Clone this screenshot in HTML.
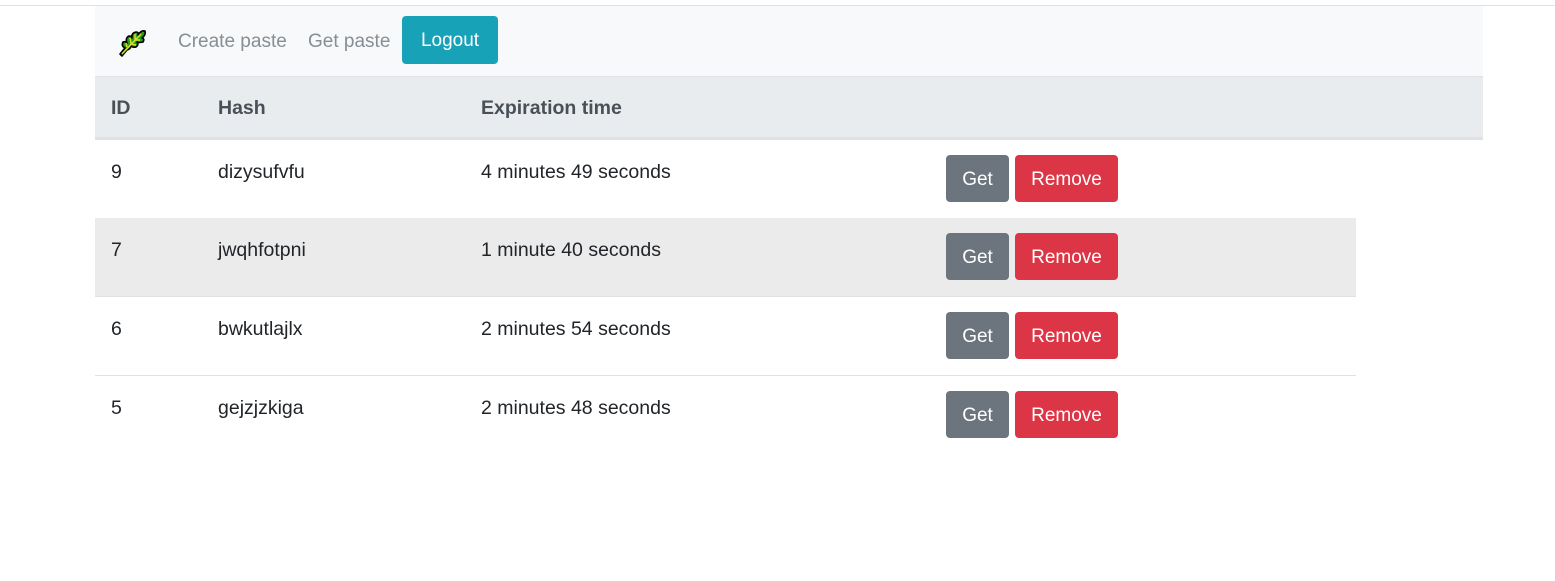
<!DOCTYPE html>
<html><head><style>
body{margin:0;background:#fff;font-family:"Liberation Sans",sans-serif;color:#212529;width:1555px;height:581px;position:relative;overflow:hidden}
.top{position:absolute;left:0;top:5px;width:1555px;height:1px;background:#dee2e6}
.nav{position:absolute;left:95px;top:6px;width:1388px;height:70px;background:#f8f9fa;border-bottom:1px solid #dee2e6}
.nav a{position:absolute;top:25px;font-size:19px;color:#868e96;text-decoration:none}
.logout{position:absolute;left:307px;top:10px;width:96px;height:48px;background:#17a2b8;border-radius:4px;color:#fff;font-size:19px;line-height:50px;text-align:center}
.thead{position:absolute;left:95px;top:77px;width:1388px;height:60px;background:#e9ecef;border-bottom:3px solid #dee2e6}
.th{position:absolute;top:20px;font-weight:bold;font-size:19.5px;color:#495057}
.row{position:absolute;left:95px;width:1261px;height:78px;border-bottom:1px solid #dee2e6}
.row span{position:absolute;top:21px;font-size:19.5px}
.b{position:absolute;top:15px;height:47px;line-height:50px;border-radius:4px;color:#fff;font-size:19px;text-align:center}
.g{left:851px;width:63px;background:#6c757d}
.r{left:920px;width:103px;background:#dc3545}
</style></head><body>
<div class="top"></div>
<div class="nav">
<svg style="position:absolute;left:22px;top:20px" width="30" height="32" viewBox="0 0 30 32">
<path d="M3 28 L8 22 Q4 20 6 16 Q9 15 10 17 Q8 12 12 10 Q15 10 15 12 Q14 7 19 6 Q22 6 21 9 Q24 4 28 5 Q29 9 25 12 Q28 13 26 16 Q22 17 20 16 Q22 19 19 21 Q15 22 14 19 Q14 23 10 24 L5 30 Z" fill="#2a9d1a" stroke="#000" stroke-width="1.6" stroke-linejoin="round"/>
<path d="M5 28 L24 8 M10 21 L9 17 M14 17 L13 12 M18 13 L18 8 M13 18 L19 19 M17 14 L23 14" stroke="#d6e12a" stroke-width="1.5" fill="none"/>
</svg>
<a style="left:83px">Create paste</a>
<a style="left:213px">Get paste</a>
<div class="logout">Logout</div>
</div>
<div class="thead">
<div class="th" style="left:16px">ID</div>
<div class="th" style="left:123px">Hash</div>
<div class="th" style="left:386px">Expiration time</div>
</div>
<div class="row" style="top:140px"><span style="left:16px">9</span><span style="left:123px">dizysufvfu</span><span style="left:386px">4 minutes 49 seconds</span><div class="b g">Get</div><div class="b r">Remove</div></div>
<div class="row" style="top:218px;background:#ebebeb"><span style="left:16px">7</span><span style="left:123px">jwqhfotpni</span><span style="left:386px">1 minute 40 seconds</span><div class="b g">Get</div><div class="b r">Remove</div></div>
<div class="row" style="top:297px"><span style="left:16px">6</span><span style="left:123px">bwkutlajlx</span><span style="left:386px">2 minutes 54 seconds</span><div class="b g">Get</div><div class="b r">Remove</div></div>
<div class="row" style="top:376px;border-bottom:none"><span style="left:16px">5</span><span style="left:123px">gejzjzkiga</span><span style="left:386px">2 minutes 48 seconds</span><div class="b g">Get</div><div class="b r">Remove</div></div>
</body></html>
